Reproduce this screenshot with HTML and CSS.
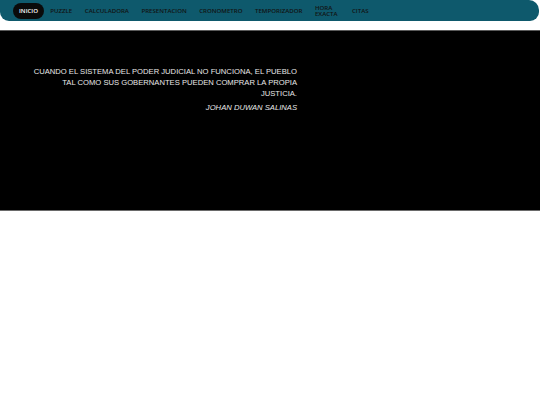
FILE: index.html
```html
<!DOCTYPE html>
<html lang="es">
<head>
<meta charset="utf-8">
<title>Inicio</title>
<link rel="stylesheet" href="styles.css">
</head>
<body>
<header class="topbar">
  <nav class="nav">
    <a class="nav-link nav-link--active" href="#">INICIO</a>
    <a class="nav-link" href="#">PUZZLE</a>
    <a class="nav-link" href="#">CALCULADORA</a>
    <a class="nav-link" href="#">PRESENTACION</a>
    <a class="nav-link" href="#">CRONOMETRO</a>
    <a class="nav-link" href="#">TEMPORIZADOR</a>
    <a class="nav-link nav-link--wrap" href="#">HORA EXACTA</a>
    <a class="nav-link" href="#">CITAS</a>
  </nav>
</header>
<section class="hero">
  <blockquote class="quote">
    <p class="quote-text">CUANDO EL SISTEMA DEL PODER JUDICIAL NO FUNCIONA, EL PUEBLO TAL COMO SUS GOBERNANTES PUEDEN COMPRAR LA PROPIA JUSTICIA.</p>
    <p class="quote-author">JOHAN DUWAN SALINAS</p>
  </blockquote>
</section>
</body>
</html>
```
FILE: styles.css
```css
* { box-sizing: border-box; }
html, body { margin: 0; padding: 0; background: #ffffff; }
body { font-family: "Liberation Sans", Arial, sans-serif; }

.topbar {
  height: 30px;
  padding-right: 1px;
}
.nav {
  height: 21px;
  background: #0e596c;
  border-radius: 0 10px 9px 9px;
  display: flex;
  align-items: center;
  padding: 0 0 0 13px;
}
.nav-link {
  font-family: "Open Sans", "Liberation Sans", sans-serif;
  font-size: 6.1px;
  font-weight: 600;
  line-height: 6px;
  color: #121212;
  text-decoration: none;
  padding: 0 6.25px;
}
.nav-link--active {
  background: #0a0a0a;
  color: #ffffff;
  border-radius: 8px;
  height: 16px;
  display: flex;
  align-items: center;
  padding: 0 6px;
}
.nav-link--wrap {
  width: 37px;
  line-height: 5.6px;
  padding-top: 1px;
}

.hero {
  background: #000000;
  height: 181px;
  border-top: 1px solid #5a5a5a;
  border-bottom: 1px solid #6a6a6a;
  padding: 35px 0 0 0;
}
.quote {
  margin: 0;
  width: 297px;
  padding-left: 33px;
  text-align: right;
  color: #e8e8e8;
}
.quote-text {
  margin: 0;
  font-size: 7.65px;
  line-height: 11px;
}
.quote-author {
  margin: 3px 0 0 0;
  font-size: 7.65px;
  line-height: 11px;
  font-style: italic;
}
```
